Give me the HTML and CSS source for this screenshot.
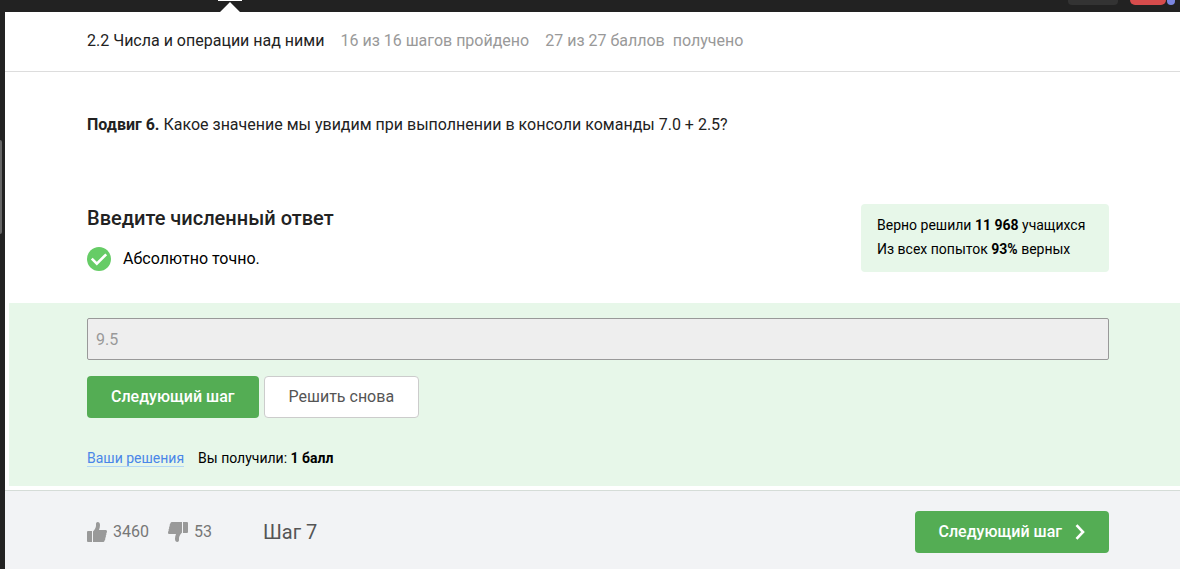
FILE: index.html
```html
<!DOCTYPE html>
<html lang="ru">
<head>
<meta charset="utf-8">
<title>2.2 Числа и операции над ними</title>
<link rel="stylesheet" href="styles.css">
</head>
<body>
<div class="topbar">
  <svg class="tab-marker" width="24" height="12" viewBox="0 0 24 12" aria-hidden="true"><path d="M0 0h24v1H0zM12 2l10 10H2z" fill="#fff"/></svg>
  <div class="topbar-items"><span class="chip"></span><span class="chip chip-red"></span><span class="dot"></span></div>
</div>
<div class="shell">
  <aside class="sidebar"><div class="scroll-thumb"></div></aside>
  <main class="page">
    <header class="lesson-head gutter">
      <span class="lesson-title">2.2 Числа и операции над ними</span>
      <span>16 из 16 шагов пройдено</span>
      <span>27 из 27 баллов&nbsp; получено</span>
    </header>
    <section class="step gutter">
      <p class="question"><b>Подвиг 6.</b> Какое значение мы увидим при выполнении в консоли команды 7.0 + 2.5?</p>
      <div class="summary">
        <div>
          <h2 class="quiz-title"><label for="answer">Введите численный ответ</label></h2>
          <div class="status">
            <svg width="24" height="24" viewBox="0 0 24 24" aria-hidden="true"><circle cx="12" cy="12" r="12" fill="#66cc66"/><path d="M4.800 11.700l5 5 9.400-9.400" fill="none" stroke="#fff" stroke-width="2.600"/></svg>
            <span>Абсолютно точно.</span>
          </div>
        </div>
        <div class="stats">Верно решили <b>11 968</b> учащихся<br>Из всех попыток <b>93%</b> верных</div>
      </div>
    </section>
    <section class="attempt">
      <input class="answer" id="answer" type="text" value="9.5" disabled>
      <div class="actions">
        <button class="btn btn-primary" type="button">Следующий шаг</button>
        <button class="btn btn-plain" type="button">Решить снова</button>
      </div>
      <div class="result">
        <a class="link" href="#solutions">Ваши решения</a>
        <span>Вы получили: <b>1 балл</b></span>
      </div>
    </section>
    <footer class="footer gutter">
      <button class="vote" type="button" aria-label="Нравится, 3460">
        <svg width="20" height="20" viewBox="0 0 20 20" aria-hidden="true"><path d="M1 9h4v11H1a1 1 0 0 1-1-1v-9a1 1 0 0 1 1-1zM6 9.500C7.500 8 8.700 6 9 4V2c0-1.300.7-2 1.700-2C12 0 13 1.200 13 3c0 1.800-.3 3.300-1 5h6.500c1 0 1.500.7 1.500 1.600 0 .8-.3 1.200-.7 1.700.3 1 .1 1.700-.5 2.200.3 1.200 0 2-.6 2.500.3 1.200 0 2-.6 2.500-.2 1-.8 1.500-1.800 1.500H6z" fill="#999"/></svg>
        <span>3460</span>
      </button>
      <button class="vote" type="button" aria-label="Не нравится, 53">
        <svg width="20" height="20" viewBox="0 0 20 20" aria-hidden="true"><path transform="rotate(180 10 10)" d="M1 9h4v11H1a1 1 0 0 1-1-1v-9a1 1 0 0 1 1-1zM6 9.500C7.500 8 8.700 6 9 4V2c0-1.300.7-2 1.700-2C12 0 13 1.200 13 3c0 1.800-.3 3.300-1 5h6.500c1 0 1.500.7 1.500 1.600 0 .8-.3 1.200-.7 1.700.3 1 .1 1.700-.5 2.200.3 1.200 0 2-.6 2.500.3 1.200 0 2-.6 2.500-.2 1-.8 1.500-1.800 1.500H6z" fill="#999"/></svg>
        <span>53</span>
      </button>
      <span class="step-name">Шаг 7</span>
      <button class="btn btn-primary btn-next" type="button">Следующий шаг
        <svg width="10" height="16" viewBox="0 0 10 16" aria-hidden="true"><path d="M1.500 1.200L8 8l-6.500 6.800" fill="none" stroke="#fff" stroke-width="2.600"/></svg>
      </button>
    </footer>
  </main>
</div>
</body>
</html>
```
FILE: styles.css
```css
* { box-sizing: border-box; }
body {
  margin: 0;
  min-height: 100vh;
  display: flex;
  flex-direction: column;
  font: 16px/24px Roboto, "Noto Sans", sans-serif;
  color: #222;
  background: #fff;
}
.topbar {
  height: 12px;
  display: flex;
  justify-content: space-between;
  align-items: flex-start;
  padding: 0 5px 0 218px;
  background: #222;
}
.tab-marker { display: block; }
.topbar-items { display: flex; }
.chip {
  width: 50px;
  height: 5px;
  margin-right: 12px;
  background: #333;
  border-radius: 0 0 4px 4px;
}
.chip-red {
  width: 36px;
  margin-right: 1px;
  background: #d64c4c;
  border-radius: 0 0 12px 12px;
}
.dot {
  width: 8px;
  height: 5px;
  background: #7b86e0;
  border-radius: 0 0 4px 4px;
}
.shell { flex: 1; display: flex; }
.sidebar { width: 5px; padding-top: 128px; background: #222; }
.scroll-thumb { width: 2px; height: 94px; background: #666; border-radius: 0 2px 2px 0; }
.page { flex: 1; display: flex; flex-direction: column; }
.gutter { padding-left: 82px; padding-right: 71px; }
.lesson-head {
  display: flex;
  gap: 16px;
  padding-top: 17px;
  padding-bottom: 18px;
  border-bottom: 1px solid #ddd;
  color: #999;
}
.lesson-title { color: #222; }
.step { padding-top: 41px; padding-bottom: 31px; }
.question { margin: 0 0 67px; }
.summary { display: flex; justify-content: space-between; align-items: flex-start; }
.quiz-title { margin: 0 0 15px; font-size: 20px; line-height: 28px; font-weight: 500; }
.status { display: flex; align-items: center; gap: 12px; color: #000; }
.stats {
  min-width: 248px;
  padding: 9px 16px 11px;
  font-size: 14px;
  color: #000;
  background: #e7f7e9;
  border-radius: 4px;
}
.attempt {
  margin: 0 0 4px 4px;
  padding: 15px 71px 16px 78px;
  background: #e7f7e9;
}
.answer {
  display: block;
  width: 100%;
  height: 42px;
  padding: 0 8px;
  font: inherit;
  color: #999;
  background: #eee;
  border: 1px solid #999;
  border-radius: 2px;
}
.actions { display: flex; gap: 5px; margin: 16px 0 28px; }
.btn {
  height: 42px;
  padding: 0 24px;
  font: inherit;
  border: 1px solid transparent;
  border-radius: 4px;
}
.btn-primary { padding: 0 23px; color: #fff; background: #54ad54; font-weight: 500; }
.btn-plain { color: #555; background: #fff; border-color: #ccc; }
.result { display: flex; align-items: center; gap: 14px; font-size: 14px; color: #000; }
.link { line-height: 16px; color: #4a86e8; text-decoration: none; border-bottom: 1px solid #b3d7f5; }
.footer {
  flex: 1;
  display: flex;
  align-items: center;
  border-top: 1px solid #d5dcd7;
  background: #f2f3f5;
  padding-top: 20px;
  padding-bottom: 16px;
}
.vote {
  display: flex;
  align-items: center;
  gap: 6px;
  margin-right: 19px;
  padding: 0;
  font: inherit;
  color: #777;
  background: none;
  border: 0;
}
.step-name { margin-left: 32px; font-size: 20px; color: #555; }
.btn-next { display: flex; align-items: center; gap: 13px; margin-left: auto; }
```
